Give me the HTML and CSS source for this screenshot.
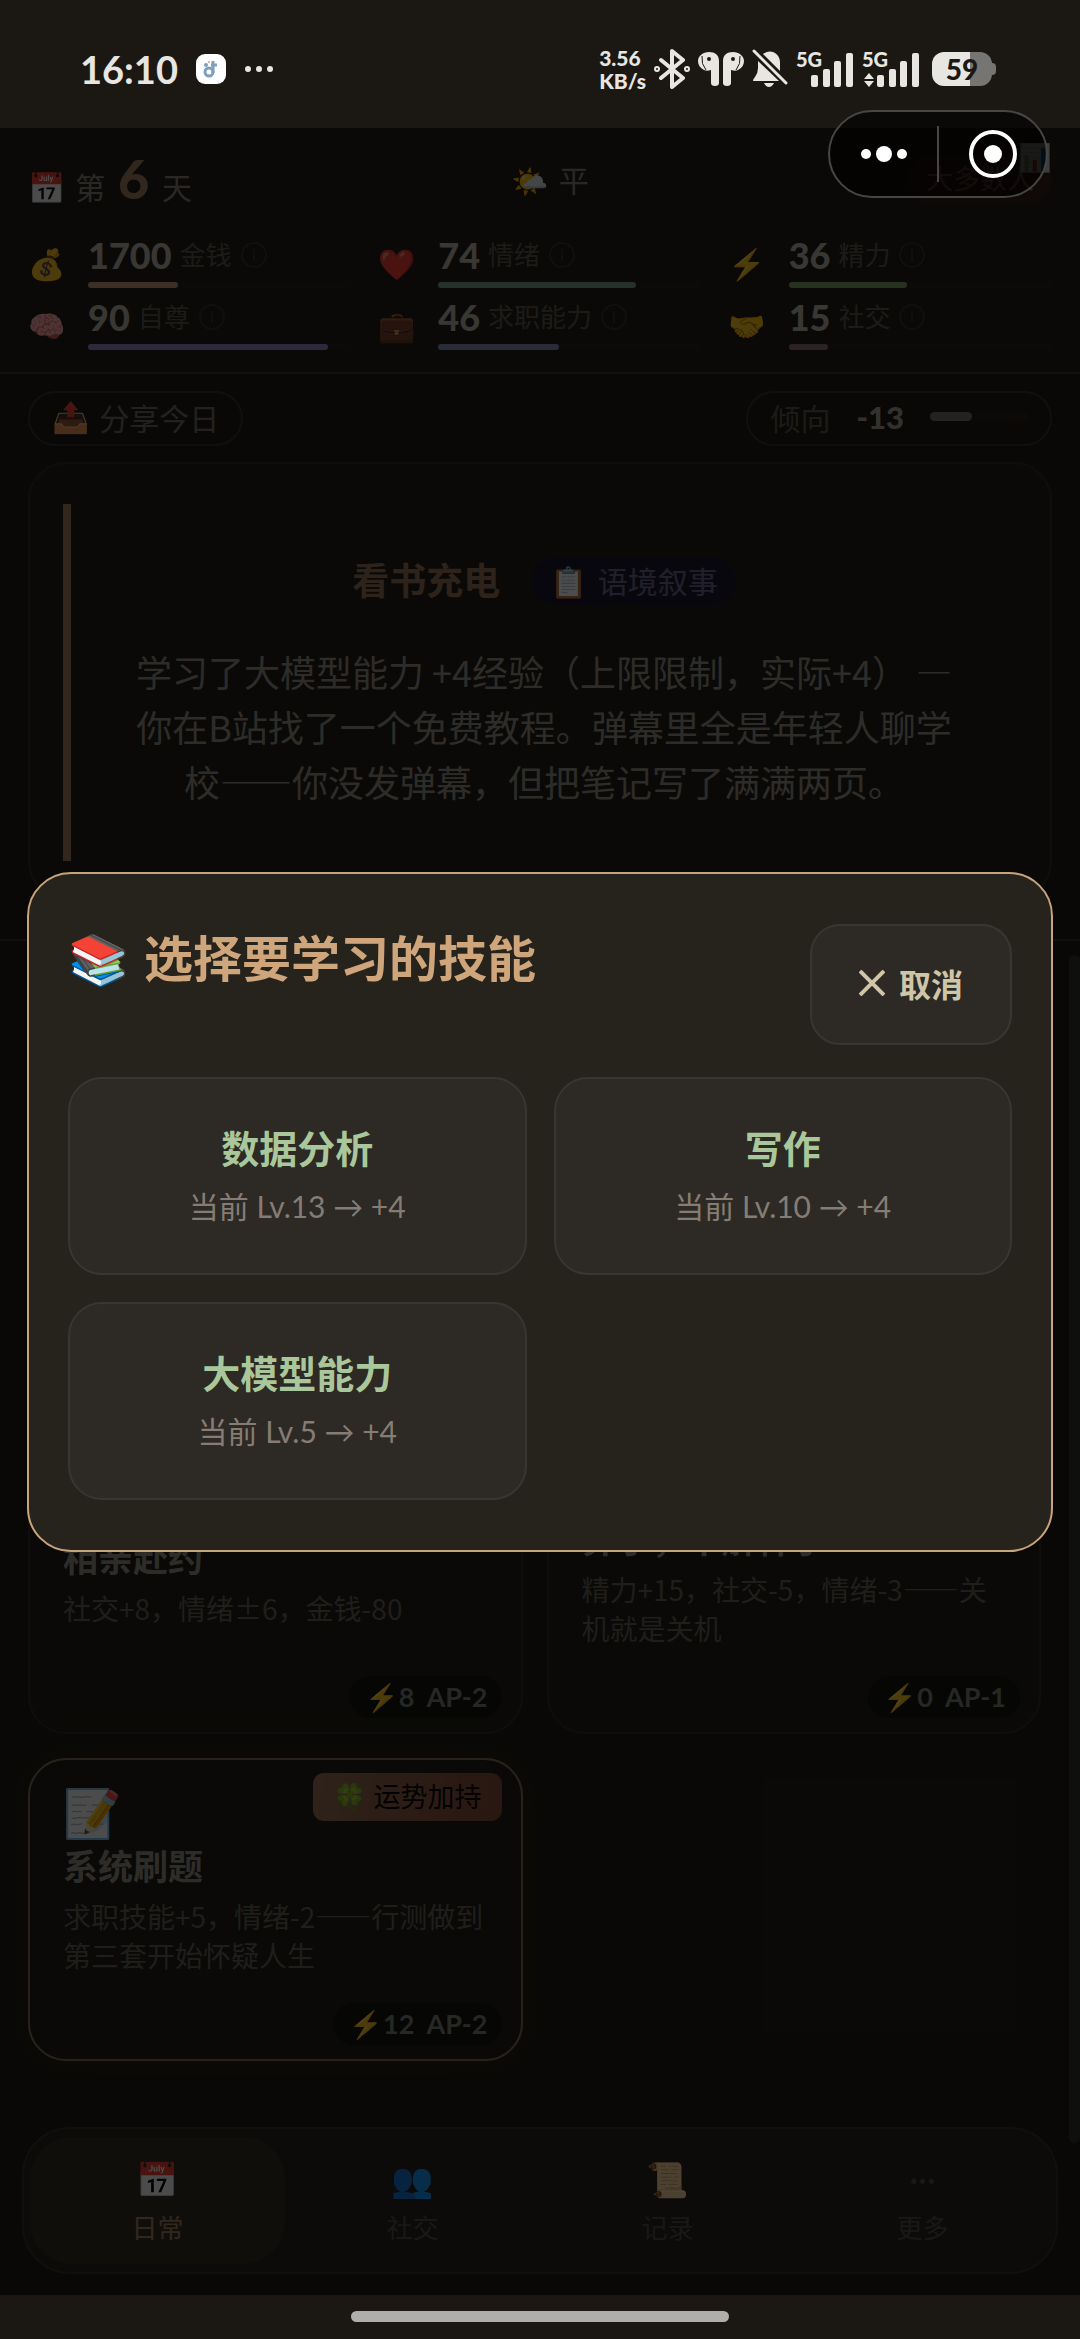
FILE: index.html
```
<!DOCTYPE html>
<html lang="zh-CN">
<head>
  <meta charset="UTF-8" />
  <meta name="viewport" content="width=device-width, initial-scale=1" />
  <title>第 6 天</title>
  <link rel="stylesheet" href="styles.css">
</head>
<body>
  <!-- System status bar -->
  <div class="status-bar">
    <div class="status-left">
      <span class="clock">16:10</span>
      <svg class="app-icon" viewBox="0 0 30 30" width="30" height="30">
        <rect width="30" height="30" rx="9" fill="#fff" />
        <circle cx="13" cy="18" r="4" fill="none" stroke="#7f9fbe" stroke-width="3" />
        <path d="M17 7v12M15 11h6" fill="none" stroke="#7f9fbe" stroke-width="3" />
        <circle cx="10" cy="11" r="2" fill="#7f9fbe" />
        <circle cx="13" cy="8" r="1" fill="#c5a5a5" />
      </svg>
      <svg viewBox="0 0 30 8" width="30" height="8" fill="#e8e6e2">
        <circle cx="4" cy="4" r="3" /><circle cx="15" cy="4" r="3" /><circle cx="26" cy="4" r="3" />
      </svg>
    </div>
    <div class="status-right">
      <span class="speed">3.56<br>KB/s</span>
      <svg viewBox="0 0 36 40" width="36" height="40" fill="none" stroke="#e8e6e2" stroke-width="4" stroke-linejoin="round" stroke-linecap="round">
        <path d="M7 11l22 18-11 9V2l11 9L7 29" />
        <circle cx="3" cy="20" r="1" /><circle cx="33" cy="20" r="1" />
      </svg>
      <svg viewBox="0 0 46 36" width="46" height="36" fill="#e8e6e2">
        <path d="M11 1c6 0 10 3 10 9v22q0 3-4 3t-4-3V19c-3 1-5 1-7 0-4-2-6-5-6-9 0-5 5-9 11-9zM35 1c-6 0-10 3-10 9v22q0 3 4 3t4-3V19c3 1 5 1 7 0 4-2 6-5 6-9 0-5-5-9-11-9z" />
        <circle cx="11" cy="8" r="2" fill="#1b1813" /><circle cx="35" cy="8" r="2" fill="#1b1813" />
        <path d="M4 5q-1 8 4 14M42 5q1 8-4 14" fill="none" stroke="#1b1813" stroke-width="1" />
      </svg>
      <svg viewBox="0 0 36 40" width="36" height="40" fill="#e8e6e2">
        <path d="M11 5c7-6 17-1 17 8v9zM6 12l21 20H1q0-2 2-4 3-4 3-9zM12 34h10q-2 4-5 4t-5-4z" />
        <path d="M2 2l32 32" fill="none" stroke="#e8e6e2" stroke-width="3" stroke-linecap="round" />
      </svg>
      <div class="signal">
        <span>5G</span>
        <svg viewBox="0 0 58 40" width="58" height="40" fill="#e8e6e2">
          <rect x="15" y="26" width="7" height="12" rx="2" /><rect x="27" y="20" width="7" height="18" rx="2" />
          <rect x="38" y="12" width="7" height="26" rx="2" /><rect x="50" y="4" width="7" height="34" rx="2" />
        </svg>
      </div>
      <div class="signal">
        <span>5G</span>
        <svg viewBox="0 0 58 40" width="58" height="40" fill="#e8e6e2">
          <path d="M2 30l5-6 5 6zM2 32l5 6 5-6z" />
          <rect x="15" y="26" width="7" height="12" rx="2" /><rect x="27" y="20" width="7" height="18" rx="2" />
          <rect x="38" y="12" width="7" height="26" rx="2" /><rect x="50" y="4" width="7" height="34" rx="2" />
        </svg>
      </div>
      <div class="battery">59</div>
    </div>
  </div>

  <div class="app">
    <header class="top">
      <div class="day-row">
        <div class="day"><span class="emoji">📅</span>第 <b>6</b> 天</div>
        <div class="weather"><span class="emoji">🌤️</span>平</div>
        <div class="rank">大多数人<span class="rank-chart">📊</span></div>
      </div>
      <div class="stats">
        <div class="stat">
          <span class="stat-icon">💰</span>
          <div class="stat-body">
            <div class="stat-line"><b>1700</b><span>金钱</span><i class="info"></i></div>
            <div class="bar"><div class="fill gold" style="width: 34%"></div></div>
          </div>
        </div>
        <div class="stat">
          <span class="stat-icon">❤️</span>
          <div class="stat-body">
            <div class="stat-line"><b>74</b><span>情绪</span><i class="info"></i></div>
            <div class="bar"><div class="fill teal" style="width: 75%"></div></div>
          </div>
        </div>
        <div class="stat">
          <span class="stat-icon">⚡</span>
          <div class="stat-body">
            <div class="stat-line"><b>36</b><span>精力</span><i class="info"></i></div>
            <div class="bar"><div class="fill green" style="width: 45%"></div></div>
          </div>
        </div>
        <div class="stat">
          <span class="stat-icon">🧠</span>
          <div class="stat-body">
            <div class="stat-line"><b>90</b><span>自尊</span><i class="info"></i></div>
            <div class="bar"><div class="fill purple" style="width: 91%"></div></div>
          </div>
        </div>
        <div class="stat">
          <span class="stat-icon">💼</span>
          <div class="stat-body">
            <div class="stat-line"><b>46</b><span>求职能力</span><i class="info"></i></div>
            <div class="bar"><div class="fill blue" style="width: 46%"></div></div>
          </div>
        </div>
        <div class="stat">
          <span class="stat-icon">🤝</span>
          <div class="stat-body">
            <div class="stat-line"><b>15</b><span>社交</span><i class="info"></i></div>
            <div class="bar"><div class="fill rose" style="width: 15%"></div></div>
          </div>
        </div>
      </div>
    </header>

    <section class="log">
      <div class="log-tools">
        <button class="share"><span class="emoji">📤</span>分享今日</button>
        <div class="trend">
          <span>倾向</span>
          <b>-13</b>
          <div class="trend-bar"><div class="trend-fill" style="width: 43%"></div></div>
        </div>
      </div>
      <article class="story">
        <div class="story-inner">
          <div class="story-head">
            <h3>看书充电</h3>
            <span class="tag"><span class="emoji">📋</span>语境叙事</span>
          </div>
          <p>学习了大模型能力 +4经验（上限限制，实际+4） —<br>你在B站找了一个免费教程。弹幕里全是年轻人聊学校——你没发弹幕，但把笔记写了满满两页。</p>
        </div>
      </article>
    </section>

    <section class="actions">
      <button class="card">
        <span class="card-icon">💕</span>
        <strong>相亲赴约</strong>
        <span class="desc">社交+8，情绪±6，金钱-80</span>
        <span class="cost">⚡8&nbsp; AP-2</span>
      </button>
      <button class="card">
        <span class="card-icon">📴</span>
        <strong>算了，不解释了</strong>
        <span class="desc">精力+15，社交-5，情绪-3——关机就是关机</span>
        <span class="cost">⚡0&nbsp; AP-1</span>
      </button>
      <button class="card lucky">
        <span class="luck">🍀 运势加持</span>
        <span class="card-icon">📝</span>
        <strong>系统刷题</strong>
        <span class="desc">求职技能+5，情绪-2——行测做到第三套开始怀疑人生</span>
        <span class="cost">⚡12&nbsp; AP-2</span>
      </button>
    </section>

    <nav class="tabs">
      <button class="tab active"><span class="tab-icon">📅</span>日常</button>
      <button class="tab"><span class="tab-icon">👥</span>社交</button>
      <button class="tab"><span class="tab-icon">📜</span>记录</button>
      <button class="tab"><span class="tab-icon">···</span>更多</button>
    </nav>

    <div class="scroll-thumb"></div>

    <!-- Skill picker -->
    <div class="overlay">
      <div class="modal" role="dialog" aria-labelledby="modal-title">
        <div class="modal-head">
          <h2 id="modal-title"><span class="emoji">📚</span>选择要学习的技能</h2>
          <button class="cancel">
            <svg viewBox="0 0 26 26" width="26" height="26" fill="none" stroke="#cfc6a8" stroke-width="4"><path d="M1 1l24 24M25 1L1 25" /></svg>
            <span>取消</span>
          </button>
        </div>
        <div class="skills">
          <button class="skill"><strong>数据分析</strong><span>当前 Lv.13 → +4</span></button>
          <button class="skill"><strong>写作</strong><span>当前 Lv.10 → +4</span></button>
          <button class="skill"><strong>大模型能力</strong><span>当前 Lv.5 → +4</span></button>
        </div>
      </div>
    </div>

    <!-- Mini program capsule -->
    <div class="capsule">
      <button aria-label="更多选项">
        <svg viewBox="0 0 48 18" width="48" height="18" fill="#fff">
          <circle cx="6" cy="9" r="5" /><circle cx="24" cy="9" r="8" /><circle cx="42" cy="9" r="5" />
        </svg>
      </button>
      <button aria-label="关闭">
        <svg viewBox="0 0 48 48" width="48" height="48">
          <circle cx="24" cy="24" r="22" fill="none" stroke="#fff" stroke-width="4" />
          <circle cx="24" cy="24" r="9" fill="#fff" />
        </svg>
      </button>
    </div>
  </div>

  <div class="home-bar"><div class="home-line"></div></div>
</body>
</html>
```

FILE: styles.css
```
* {
  box-sizing: border-box;
}

body {
  margin: 0;
  min-height: 100vh;
  display: flex;
  flex-direction: column;
  background: #1b1813;
  color: #aaa69c;
  font-family: Lato, "Noto Sans CJK SC", "Noto Color Emoji", sans-serif;
  font-size: 30px;
}

button {
  font: inherit;
  color: inherit;
  background: none;
  border: 0;
  padding: 0;
  cursor: pointer;
}

h2, h3, p {
  margin: 0;
}

/* status bar */
.status-bar {
  height: 128px;
  padding: 10px 84px 0 80px;
  display: flex;
  align-items: center;
  justify-content: space-between;
  color: #e8e6e2;
}

.status-left {
  display: flex;
  align-items: center;
  gap: 18px;
}

.clock {
  font-size: 38px;
  font-weight: 700;
}

.status-right {
  display: flex;
  align-items: center;
  gap: 8px;
}

.speed {
  font-size: 21px;
  line-height: 23px;
  font-weight: 900;
}

.signal {
  position: relative;
  height: 40px;
}

.signal span {
  position: absolute;
  left: 0;
  top: 0;
  font-size: 20px;
  line-height: 20px;
  font-weight: 900;
}

.battery {
  position: relative;
  width: 60px;
  height: 34px;
  margin: 0 4px;
  border-radius: 12px;
  background: linear-gradient(90deg, #e8e6e2 63%, #777572 63%);
  color: #1b1813;
  font-size: 28px;
  line-height: 34px;
  font-weight: 900;
  text-align: center;
}

.battery::after {
  content: "";
  position: absolute;
  right: -4px;
  top: 11px;
  width: 4px;
  height: 12px;
  border-radius: 0 4px 4px 0;
  background: #777572;
}

/* page */
.app {
  position: relative;
  flex: 1;
  display: flex;
  flex-direction: column;
  background: #201d16;
}

.emoji {
  margin-right: 10px;
}

.top {
  height: 246px;
  padding: 15px 28px 0;
  border-bottom: 2px solid #3c3a33;
  background: #222018;
}

.day-row {
  display: flex;
  align-items: center;
  justify-content: space-between;
  height: 72px;
  color: #8a867c;
}

.day b {
  margin: 0 5px;
  font-size: 54px;
  line-height: 60px;
  font-weight: 900;
  color: #a88262;
}

.rank {
  position: relative;
  padding: 0 18px;
  border-radius: 24px;
  background: #33201a;
  color: #a5685a;
  font-size: 27px;
  line-height: 48px;
}

.rank-chart {
  position: absolute;
  right: 0;
  top: -22px;
  opacity: 0.8;
}

.stats {
  display: grid;
  grid-template-columns: repeat(3, 1fr);
  gap: 0 27px;
  margin-top: 18px;
}

.stat {
  display: flex;
  height: 62px;
}

.stat-icon {
  width: 60px;
  padding-top: 10px;
  line-height: 40px;
}

.stat-body {
  flex: 1;
}

.stat-line {
  display: flex;
  align-items: center;
  height: 44px;
  color: #605c52;
  font-size: 26px;
  line-height: 40px;
}

.stat-line b {
  margin-right: 8px;
  font-size: 36px;
  font-weight: 900;
  color: #bcb8ae;
}

.info {
  width: 26px;
  height: 26px;
  margin-left: 9px;
  border: 2px solid #37352e;
  border-radius: 50%;
  background: linear-gradient(#37352e, #37352e) center / 2px 12px no-repeat;
}

.bar {
  height: 6px;
  margin-top: 5px;
  border-radius: 3px;
  background: #27241d;
}

.fill {
  height: 6px;
  border-radius: 3px;
}

.gold { background: #c8a078; }
.teal { background: #7ba596; }
.green { background: #83a56a; }
.purple { background: #978bc2; }
.blue { background: #8b90b8; }
.rose { background: #8f7378; }

.log {
  padding: 17px 28px 40px;
  border-bottom: 2px solid #37342c;
}

.log-tools {
  display: flex;
  justify-content: space-between;
  margin-bottom: 16px;
}

.share,
.trend {
  display: flex;
  align-items: center;
  height: 55px;
  padding: 0 22px 4px;
  border: 2px solid #38352e;
  border-radius: 28px;
  color: #75716a;
}

.trend {
  gap: 26px;
  color: #605c52;
}

.trend b {
  font-size: 31px;
  font-weight: 900;
  color: #aaa69c;
}

.trend-bar {
  width: 98px;
  height: 9px;
  border-radius: 5px;
  background: linear-gradient(90deg, #201d16, #2a1f1a);
}

.trend-fill {
  height: 9px;
  border-radius: 5px;
  background: #77746c;
}

.story {
  padding: 40px 33px 36px;
  border: 2px solid #312e27;
  border-radius: 38px;
  background: #221f18;
}

.story-inner {
  padding: 53px 56px 52px;
  border-left: 8px solid #a88262;
}

.story-head {
  display: flex;
  align-items: center;
  justify-content: center;
  gap: 32px;
  height: 48px;
  margin-bottom: 39px;
}

.story-head h3 {
  font-size: 37px;
  line-height: 48px;
  color: #9a7658;
}

.tag {
  padding: 0 18px;
  border-radius: 24px;
  background: #1e1a30;
  color: #706a94;
  line-height: 48px;
}

.story p {
  color: #98948a;
  font-family: "Noto Sans CJK SC", sans-serif;
  font-size: 36px;
  line-height: 55px;
  text-align: center;
}

.actions {
  flex: 1;
  display: grid;
  grid-template-columns: 1fr 1fr;
  grid-auto-rows: 303px;
  align-content: end;
  gap: 24px;
  padding: 0 39px 66px 28px;
}

.card {
  position: relative;
  display: flex;
  flex-direction: column;
  justify-content: center;
  padding: 0 33px 62px;
  border: 2px solid #312e27;
  border-radius: 38px;
  background: #221f18;
  text-align: left;
}

.card-icon {
  font-size: 47px;
  line-height: 58px;
}

.card strong {
  margin-bottom: 6px;
  font-size: 35px;
  line-height: 50px;
  color: #98948a;
}

.desc {
  font-family: "Noto Sans CJK SC", sans-serif;
  font-size: 28px;
  line-height: 39px;
  color: #68645a;
}

.cost {
  position: absolute;
  right: 19px;
  bottom: 14px;
  padding: 0 14px 0 16px;
  border-radius: 21px;
  background: #171510;
  color: #7c8578;
  font-size: 27px;
  line-height: 42px;
  font-weight: 700;
}

.lucky {
  border-color: #8a7460;
  box-shadow: 0 0 30px #2a241b;
}

.luck {
  position: absolute;
  right: 19px;
  top: 13px;
  padding: 0 20px;
  border-radius: 11px;
  background: linear-gradient(100deg, #9a7458, #8a4c38);
  color: #0b0907;
  font-size: 27px;
  line-height: 48px;
}

.tabs {
  display: grid;
  grid-template-columns: repeat(4, 1fr);
  height: 147px;
  margin: 0 22px 21px;
  padding: 8px 6px;
  border: 2px solid #38342c;
  border-radius: 48px;
  background: #29261f;
}

.tab {
  display: flex;
  flex-direction: column;
  align-items: center;
  justify-content: center;
  border-radius: 42px;
  color: #55524a;
  font-size: 26px;
  line-height: 36px;
}

.tab-icon {
  margin-bottom: 8px;
  font-size: 34px;
  line-height: 46px;
}

.tab.active {
  background: #353126;
  color: #a88262;
}

.scroll-thumb {
  position: absolute;
  right: 0;
  top: 827px;
  bottom: 152px;
  width: 11px;
  border-radius: 6px;
  background: #35332c;
}

/* modal */
.overlay {
  position: absolute;
  inset: 0;
  display: flex;
  align-items: center;
  justify-content: center;
  padding: 0 27px;
  background: rgba(0, 0, 0, 0.7);
}

.modal {
  width: 100%;
  padding: 50px 39px;
  border: 2px solid #c8a47c;
  border-radius: 44px;
  background: #26231d;
}

.modal-head {
  display: flex;
  align-items: flex-start;
  justify-content: space-between;
  margin-bottom: 32px;
}

.modal h2 {
  font-size: 49px;
  line-height: 68px;
  color: #cfa67c;
}

.modal h2 .emoji {
  margin-right: 15px;
}

.cancel {
  display: flex;
  align-items: center;
  gap: 14px;
  height: 121px;
  padding: 0 47px 3px;
  border: 2px solid #393631;
  border-radius: 30px;
  background: #2d2925;
  color: #cfc6a8;
  font-size: 32px;
  font-weight: 700;
}

.skills {
  display: grid;
  grid-template-columns: 1fr 1fr;
  grid-auto-rows: 198px;
  gap: 27px;
}

.skill {
  display: flex;
  flex-direction: column;
  align-items: center;
  justify-content: center;
  border: 2px solid #393631;
  border-radius: 34px;
  background: #2d2925;
  color: #857d73;
}

.skill strong {
  font-size: 38px;
  line-height: 60px;
  color: #a9c79b;
}

.skill span {
  line-height: 56px;
}

/* floats above the overlay */
.capsule {
  position: absolute;
  right: 32px;
  top: -18px;
  display: flex;
  align-items: center;
  width: 220px;
  height: 88px;
  border: 2px solid #474644;
  border-radius: 44px;
  background: rgba(0, 0, 0, 0.6);
}

.capsule button {
  flex: 1;
  height: 56px;
  display: flex;
  align-items: center;
  justify-content: center;
}

.capsule button + button {
  border-left: 2px solid #474644;
}

.home-bar {
  display: flex;
  justify-content: center;
  height: 44px;
  padding-top: 16px;
}

.home-line {
  width: 35%;
  height: 11px;
  border-radius: 6px;
  background: #b0aeab;
}
```
